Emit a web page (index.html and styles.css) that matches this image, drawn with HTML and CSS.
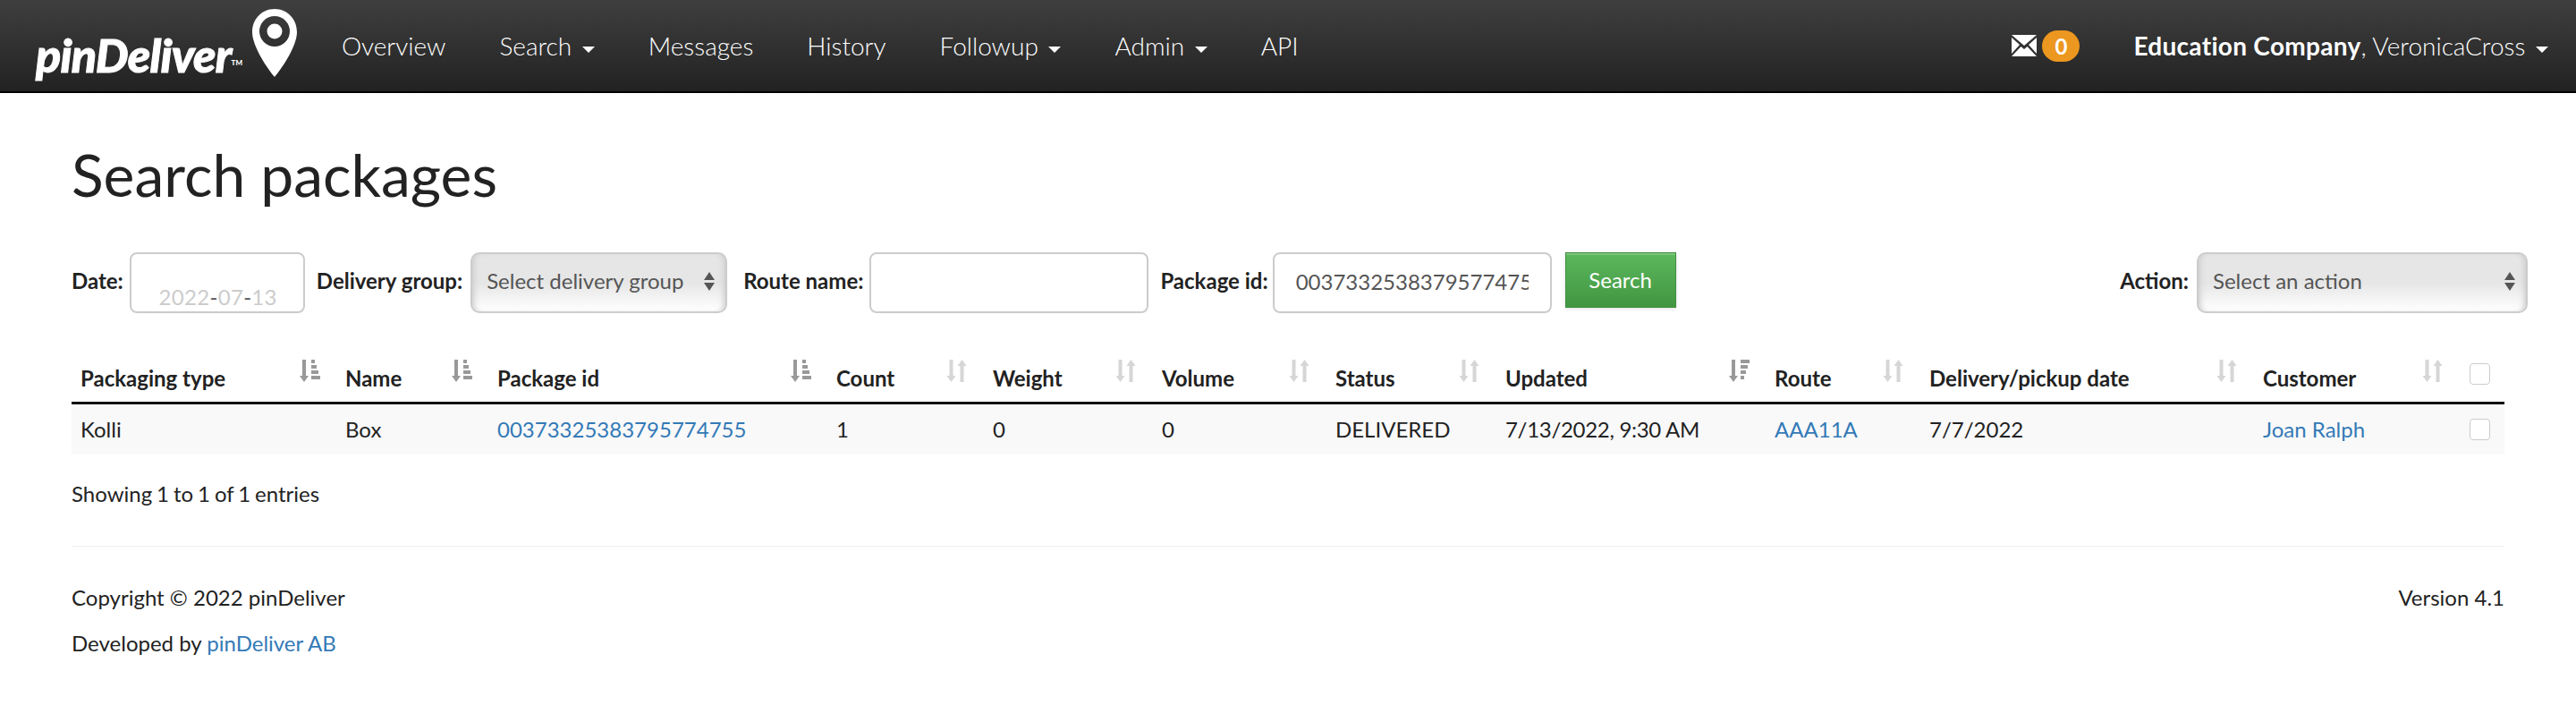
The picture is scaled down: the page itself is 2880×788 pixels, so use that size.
FILE: index.html
```html
<!DOCTYPE html>
<html lang="en-us">
<head>
    <meta charset="utf-8">
    <title>pinDeliver - Search packages</title>
    <link rel="stylesheet" href="styles.css">
</head>
<body>
    <svg class="defs" width="0" height="0">
        <symbol id="sort-none" viewBox="0 0 23 25">
            <path d="M3 0h4v18h3l-5 7-5-7h3z"/>
            <path d="M17 0l5 7h-3v18h-4V7h-3z"/>
        </symbol>
        <symbol id="sort-amount" viewBox="0 0 24 25">
            <path d="M4 0h4v18h3l-5 7-5-7h3z"/>
            <path d="M14 0h4v4h-4zM14 6h6v4h-6zM14 12h8v4h-8zM14 18h10v4H14z"/>
        </symbol>
        <symbol id="sort-desc" viewBox="0 0 24 25">
            <path d="M4 0h4v18h3l-5 7-5-7h3z"/>
            <path d="M14 0h10v4H14zM14 6h8v4h-8zM14 12h6v4h-6zM14 18h4v4h-4z"/>
        </symbol>
    </svg>

    <nav class="navbar">
        <a class="brand" href="#">
            <span class="brand-name">pinDeliver<small>TM</small></span>
            <svg class="brand-pin" viewBox="0 0 50 76">
                <path fill="#fff" fill-rule="evenodd" d="M25 0C11 0 0 11 0 26c0 16 18 42 25 50 7-8 25-34 25-50C50 11 39 0 25 0zm0 8a17 17 0 1 1 0 34 17 17 0 0 1 0-34z"/>
                <circle fill="#fff" cx="25" cy="25" r="8.5"/>
            </svg>
        </a>
        <ul class="nav-links">
            <li><a href="#">Overview</a></li>
            <li><a href="#">Search <i class="caret"></i></a></li>
            <li><a href="#">Messages</a></li>
            <li><a href="#">History</a></li>
            <li><a href="#">Followup <i class="caret"></i></a></li>
            <li><a href="#">Admin <i class="caret"></i></a></li>
            <li><a href="#">API</a></li>
        </ul>
        <div class="nav-right">
            <svg class="mail" viewBox="0 0 28 24">
                <path fill="#fff" d="M0 0h28L14 12zM0 3v18l9-10zM28 3v18l-9-10zM0 24l10.500-11 3.500 3 3.500-3L28 24z"/>
            </svg>
            <span class="badge">0</span>
            <a class="account" href="#"><b>Education Company</b>, VeronicaCross <i class="caret"></i></a>
        </div>
    </nav>

    <main class="page">
        <h1>Search packages</h1>

        <form class="filters">
            <label>Date:</label>
            <div class="date-box"><span>2022<em>-</em>07<em>-</em>13</span></div>
            <label class="gap-date">Delivery group:</label>
            <div class="select select-group">
                <span>Select delivery group</span>
                <i class="updown"></i>
            </div>
            <label class="gap-group">Route name:</label>
            <input class="text-input" type="text">
            <label class="gap-route">Package id:</label>
            <input class="text-input" type="text" value="00373325383795774755">
            <button class="btn-search" type="button">Search</button>
            <label class="action-label">Action:</label>
            <div class="select select-action">
                <span>Select an action</span>
                <i class="updown"></i>
            </div>
        </form>

        <table class="packages">
            <colgroup>
                <col class="c-type"><col class="c-name"><col class="c-id"><col class="c-count">
                <col class="c-weight"><col class="c-volume"><col class="c-status"><col class="c-updated">
                <col class="c-route"><col class="c-date"><col class="c-customer"><col class="c-check">
            </colgroup>
            <thead>
                <tr>
                    <th><div class="th">Packaging type<svg class="sort active"><use href="#sort-amount"/></svg></div></th>
                    <th><div class="th">Name<svg class="sort active"><use href="#sort-amount"/></svg></div></th>
                    <th><div class="th">Package id<svg class="sort active"><use href="#sort-amount"/></svg></div></th>
                    <th><div class="th">Count<svg class="sort"><use href="#sort-none"/></svg></div></th>
                    <th><div class="th">Weight<svg class="sort"><use href="#sort-none"/></svg></div></th>
                    <th><div class="th">Volume<svg class="sort"><use href="#sort-none"/></svg></div></th>
                    <th><div class="th">Status<svg class="sort"><use href="#sort-none"/></svg></div></th>
                    <th><div class="th">Updated<svg class="sort active"><use href="#sort-desc"/></svg></div></th>
                    <th><div class="th">Route<svg class="sort"><use href="#sort-none"/></svg></div></th>
                    <th><div class="th">Delivery/pickup date<svg class="sort"><use href="#sort-none"/></svg></div></th>
                    <th><div class="th">Customer<svg class="sort"><use href="#sort-none"/></svg></div></th>
                    <th class="check-cell"><i class="check check-head"></i></th>
                </tr>
            </thead>
            <tbody>
                <tr>
                    <td>Kolli</td>
                    <td>Box</td>
                    <td><a href="#">00373325383795774755</a></td>
                    <td>1</td>
                    <td>0</td>
                    <td>0</td>
                    <td>DELIVERED</td>
                    <td class="tight">7/13/2022, 9:30 AM</td>
                    <td><a href="#">AAA11A</a></td>
                    <td>7/7/2022</td>
                    <td><a href="#">Joan Ralph</a></td>
                    <td class="check-cell"><i class="check"></i></td>
                </tr>
            </tbody>
        </table>

        <p class="info">Showing 1 to 1 of 1 entries</p>

        <footer class="footer">
            <div class="footer-row">
                <span>Copyright © 2022 pinDeliver</span>
                <span>Version 4.1</span>
            </div>
            <div class="footer-row">
                <span>Developed by <a href="#">pinDeliver AB</a></span>
            </div>
        </footer>
    </main>
</body>
</html>
```

FILE: styles.css
```css
* {
    box-sizing: border-box;
}
body {
    margin: 0;
    background: #fff;
    color: #222;
    font: 24px/34px Lato, sans-serif;
}
a {
    color: #337ab7;
    text-decoration: none;
}
.defs {
    position: absolute;
}

/* navbar */
.navbar {
    display: flex;
    align-items: center;
    height: 104px;
    background: linear-gradient(#3f3f3f, #222);
    border-bottom: 2px solid #000;
    color: #fff;
}
.brand {
    display: flex;
    align-items: flex-start;
    width: 352px;
    height: 102px;
    padding: 10px 0 0 40px;
    color: #fff;
}
.brand-name {
    width: 242px;
    margin-top: 21px;
    font: italic 900 52px/60px Lato, sans-serif;
    letter-spacing: -0.8px;
    -webkit-text-stroke: 1px #fff;
    white-space: nowrap;
}
.brand-name small {
    font-size: 8px;
    font-style: normal;
    letter-spacing: 0;
    -webkit-text-stroke: 0;
    vertical-align: 8px;
}
.brand-pin {
    width: 50px;
    height: 76px;
}
.nav-links {
    display: flex;
    margin: 0;
    padding: 0;
    list-style: none;
}
.nav-links a {
    display: block;
    padding: 0 30px;
    color: #fff;
    font-size: 28px;
    font-weight: 300;
    line-height: 96px;
}
.caret {
    display: inline-block;
    width: 0;
    height: 0;
    margin-left: 4px;
    border-top: 7px solid #fff;
    border-left: 7px solid transparent;
    border-right: 7px solid transparent;
    vertical-align: middle;
}
.nav-right {
    display: flex;
    align-items: center;
    margin-left: auto;
    padding-right: 31px;
}
.mail {
    width: 28px;
    height: 24px;
    margin-right: 6px;
}
.badge {
    width: 42px;
    height: 35px;
    margin-right: 60px;
    border-radius: 18px;
    background: #ec971f;
    color: #fff;
    font-size: 24px;
    font-weight: 700;
    line-height: 35px;
    text-align: center;
}
.account {
    color: #fff;
    font-size: 28px;
    font-weight: 300;
    line-height: 96px;
}
.account b {
    font-weight: 700;
    letter-spacing: 0.3px;
}

/* page */
.page {
    padding: 0 80px;
}
h1 {
    margin: 48px 0 44px;
    font-size: 66px;
    font-weight: 400;
    line-height: 86px;
}

/* filter form */
.filters {
    display: flex;
    align-items: center;
    height: 68px;
    margin-right: -26px;
}
.filters label {
    margin-right: 7px;
    font-weight: 700;
    position: relative;
    top: -2px;
}
.date-box {
    width: 196px;
    height: 68px;
    padding-right: 29px;
    border: 2px solid #ccc;
    border-radius: 8px;
    color: #ccc;
    text-align: right;
    line-height: 96px;
    letter-spacing: 0.3px;
    overflow: hidden;
}
.date-box em {
    color: #555;
    font-style: normal;
}
.filters .gap-date {
    margin: 0 9px 0 13px;
}
.gap-group {
    margin-left: 18px;
}
.filters .gap-route {
    margin: 0 5px 0 13px;
}
.select {
    display: flex;
    align-items: center;
    justify-content: space-between;
    height: 68px;
    padding: 0 12px 0 16px;
    border: 2px solid #ccc;
    border-radius: 10px;
    background: linear-gradient(#e6e6e6 50%, #fff);
    box-shadow: inset 6px 0 6px -4px #ccc, inset -6px 0 6px -4px #ccc;
    color: #555;
}
.select span {
    position: relative;
    top: -2px;
}
.select-group {
    width: 287px;
}
.select-action {
    width: 370px;
}
.updown {
    width: 0;
    height: 0;
    border-left: 6px solid transparent;
    border-right: 6px solid transparent;
    border-top: 9px solid #555;
    position: relative;
    top: 4px;
}
.updown::before {
    content: "";
    position: absolute;
    left: -6px;
    top: -21px;
    border-left: 6px solid transparent;
    border-right: 6px solid transparent;
    border-bottom: 9px solid #555;
}
.text-input {
    width: 312px;
    height: 68px;
    padding: 0 24px 4px;
    border: 2px solid #ccc;
    border-radius: 8px;
    color: #555;
    font: 24px Lato, sans-serif;
}
.btn-search {
    width: 124px;
    height: 62px;
    margin: 0 0 6px 15px;
    padding: 0 0 2px;
    border: 1px solid #3e8f3e;
    background: linear-gradient(#5cb85c, #419641);
    box-shadow: inset 0 2px 0 rgba(255, 255, 255, 0.2), 0 1px 4px rgba(0, 0, 0, 0.15);
    color: #fff;
    font: 24px Lato, sans-serif;
}
.filters .action-label {
    margin-left: auto;
    margin-right: 9px;
}

/* table */
.packages {
    width: 2720px;
    margin-top: 38px;
    border-collapse: collapse;
    table-layout: fixed;
}
.c-type { width: 296px; }
.c-name { width: 170px; }
.c-id { width: 379px; }
.c-count { width: 175px; }
.c-weight { width: 189px; }
.c-volume { width: 194px; }
.c-status { width: 190px; }
.c-updated { width: 301px; }
.c-route { width: 173px; }
.c-date { width: 373px; }
.c-customer { width: 230px; }
.c-check { width: 50px; }
.packages th {
    height: 62px;
    padding: 0;
    border-bottom: 3px solid #111;
    text-align: left;
    vertical-align: bottom;
}
.th {
    display: flex;
    justify-content: space-between;
    align-items: flex-start;
    height: 60px;
    padding: 13px 18px 0 10px;
    line-height: 42px;
}
.sort {
    flex: none;
    width: 24px;
    height: 25px;
    fill: #d6d6d6;
}
.sort.active {
    fill: #999;
}
.packages td {
    height: 58px;
    padding: 0 10px;
    background: #f9f9f9;
    vertical-align: middle;
}
.packages .tight {
    letter-spacing: -0.3px;
}
.packages .check-cell {
    padding: 0 16px 0 11px;
    background: none;
}
.packages th.check-cell {
    vertical-align: middle;
}
.packages tbody .check-cell {
    background: #f9f9f9;
}
.check {
    display: block;
    width: 23px;
    height: 24px;
    border: 1px solid #ccc;
    border-radius: 4px;
    background: #fff;
}
.info {
    margin: 27px 0 0;
    line-height: 34px;
    word-spacing: -1.2px;
}

/* footer */
.footer {
    margin-top: 41px;
    padding-top: 40px;
    border-top: 1px solid #eee;
}
.footer-row {
    display: flex;
    justify-content: space-between;
    height: 51px;
}
```
